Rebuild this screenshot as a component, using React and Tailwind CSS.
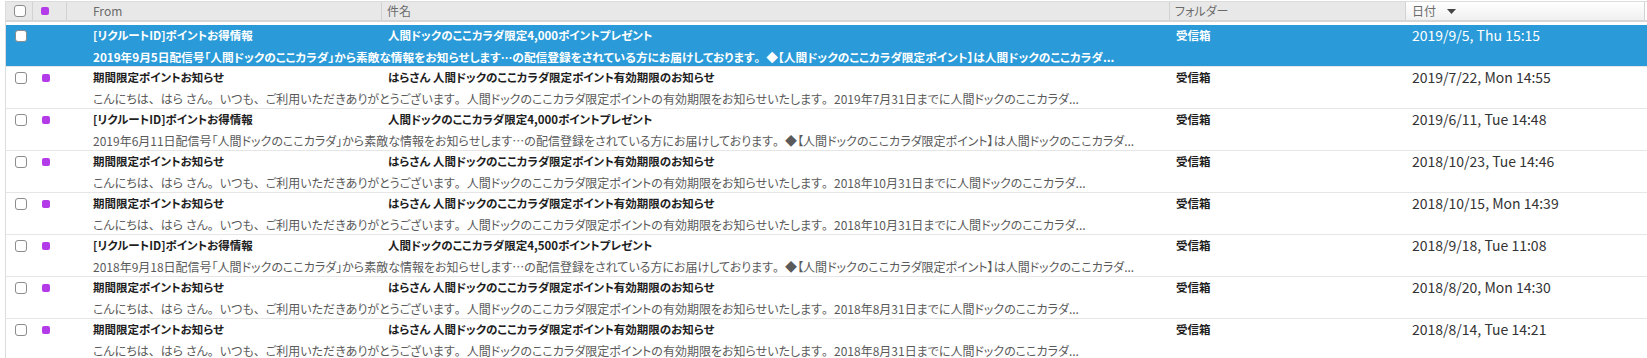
import React from 'react'

const rows = [
  {
    from: '[リクルートID]ポイントお得情報',
    subject: '人間ドックのここカラダ限定4,000ポイントプレゼント',
    preview:
      '2019年9月5日配信号「人間ドックのここカラダ」から素敵な情報をお知らせします…の配信登録をされている方にお届けしております。◆【人間ドックのここカラダ限定ポイント】は人間ドックのここカラダ...',
    date: '2019/9/5, Thu 15:15',
    selected: true,
  },
  {
    from: '期間限定ポイントお知らせ',
    subject: 'はらさん 人間ドックのここカラダ限定ポイント有効期限のお知らせ',
    preview:
      'こんにちは、はら さん。いつも、ご利用いただきありがとうございます。人間ドックのここカラダ限定ポイントの有効期限をお知らせいたします。2019年7月31日までに人間ドックのここカラダ...',
    date: '2019/7/22, Mon 14:55',
  },
  {
    from: '[リクルートID]ポイントお得情報',
    subject: '人間ドックのここカラダ限定4,000ポイントプレゼント',
    preview:
      '2019年6月11日配信号「人間ドックのここカラダ」から素敵な情報をお知らせします…の配信登録をされている方にお届けしております。◆【人間ドックのここカラダ限定ポイント】は人間ドックのここカラダ...',
    date: '2019/6/11, Tue 14:48',
  },
  {
    from: '期間限定ポイントお知らせ',
    subject: 'はらさん 人間ドックのここカラダ限定ポイント有効期限のお知らせ',
    preview:
      'こんにちは、はら さん。いつも、ご利用いただきありがとうございます。人間ドックのここカラダ限定ポイントの有効期限をお知らせいたします。2018年10月31日までに人間ドックのここカラダ...',
    date: '2018/10/23, Tue 14:46',
  },
  {
    from: '期間限定ポイントお知らせ',
    subject: 'はらさん 人間ドックのここカラダ限定ポイント有効期限のお知らせ',
    preview:
      'こんにちは、はら さん。いつも、ご利用いただきありがとうございます。人間ドックのここカラダ限定ポイントの有効期限をお知らせいたします。2018年10月31日までに人間ドックのここカラダ...',
    date: '2018/10/15, Mon 14:39',
  },
  {
    from: '[リクルートID]ポイントお得情報',
    subject: '人間ドックのここカラダ限定4,500ポイントプレゼント',
    preview:
      '2018年9月18日配信号「人間ドックのここカラダ」から素敵な情報をお知らせします…の配信登録をされている方にお届けしております。◆【人間ドックのここカラダ限定ポイント】は人間ドックのここカラダ...',
    date: '2018/9/18, Tue 11:08',
  },
  {
    from: '期間限定ポイントお知らせ',
    subject: 'はらさん 人間ドックのここカラダ限定ポイント有効期限のお知らせ',
    preview:
      'こんにちは、はら さん。いつも、ご利用いただきありがとうございます。人間ドックのここカラダ限定ポイントの有効期限をお知らせいたします。2018年8月31日までに人間ドックのここカラダ...',
    date: '2018/8/20, Mon 14:30',
  },
  {
    from: '期間限定ポイントお知らせ',
    subject: 'はらさん 人間ドックのここカラダ限定ポイント有効期限のお知らせ',
    preview:
      'こんにちは、はら さん。いつも、ご利用いただきありがとうございます。人間ドックのここカラダ限定ポイントの有効期限をお知らせいたします。2018年8月31日までに人間ドックのここカラダ...',
    date: '2018/8/14, Tue 14:21',
  },
]

const cols = 'grid grid-cols-[27px_34px_315px_788px_236px_1fr]'

// 、 and 。 keep their full width, everything else uses proportional kana
function Jp({ s }) {
  return s.split(/([、。])/).map((part, i) =>
    part === '、' || part === '。' ? (
      <span key={i} className="[font-feature-settings:normal]">
        {part}
      </span>
    ) : (
      part
    )
  )
}

function Check() {
  return <div className="w-[12px] h-[12px] rounded-[3px] border border-[#8c8c8c] bg-white" />
}

function Dot() {
  return <div className="w-[8px] h-[8px] rounded-[2px] bg-[#b43ce8]" />
}

function Header() {
  return (
    <div className={`${cols} h-[20px] border-b-2 border-[#d6d6d6] mb-[3px] text-[12px] text-[#6b6b6b]`}>
      <div className="bg-[#e8e8e8] flex items-center pl-[8px] border-r border-[#d2d2d2]">
        <Check />
      </div>
      <div className="bg-[#e8e8e8] flex items-center pl-[8px] border-r border-[#d2d2d2]">
        <Dot />
      </div>
      <div className="bg-[#e8e8e8] flex items-center pl-[26px] border-r border-[#d2d2d2]">From</div>
      <div className="bg-[#e8e8e8] flex items-center pl-[5px] border-r border-[#d2d2d2]">件名</div>
      <div className="bg-[#e8e8e8] flex items-center pl-[5px] border-r border-[#d2d2d2]">フォルダー</div>
      <div className="bg-gradient-to-b from-[#ffffff] to-[#f0f0f0] flex items-center pl-[6px] mr-[2px] border-r border-[#d2d2d2]">
        日付
        <svg width="9" height="5" viewBox="0 0 9 5" className="ml-[11px]">
          <path d="M0 0h9L4.5 5z" fill="#444" />
        </svg>
      </div>
    </div>
  )
}

function Row({ r }) {
  const sel = r.selected
  return (
    <div
      className={`${cols} grid-rows-[19px_20px] pt-px pb-px border-b border-[#e6e6e6] ${
        sel ? 'bg-[#2a9bd8] text-white' : 'bg-white text-[#1e1e1e]'
      }`}
    >
      <div className="flex items-center pl-[9px]">
        <Check />
      </div>
      <div className="flex items-center pl-[9px]">{!sel && <Dot />}</div>
      <div className="flex items-center pl-[26px] font-bold text-[11.5px] whitespace-nowrap">{r.from}</div>
      <div className="flex items-center pl-[6px] font-bold text-[11.5px] whitespace-nowrap">{r.subject}</div>
      <div className="flex items-center pl-[6px] font-bold text-[11.5px]">受信箱</div>
      <div className={`flex items-center pl-[6px] text-[14px] whitespace-nowrap ${sel ? 'text-white' : 'text-[#333333]'}`}>
        {r.date}
      </div>
      <div
        className={`col-start-3 col-end-7 flex items-center pt-[3px] pl-[26px] whitespace-nowrap ${
          sel ? 'text-white font-bold text-[11.7px]' : 'text-[#5a5a5a] text-[12px]'
        }`}
      >
        <Jp s={r.preview} />
      </div>
    </div>
  )
}

export default function App() {
  return (
    <div className="w-[1647px] h-[358px] overflow-hidden bg-white [font-family:'Noto_Sans_CJK_JP','Noto_Sans',sans-serif] [font-feature-settings:'palt']">
      <div className="mt-px ml-[5px] border-t border-l border-[#dcdcdc]">
        <Header />
        {rows.map((r, i) => (
          <Row key={i} r={r} />
        ))}
      </div>
    </div>
  )
}
